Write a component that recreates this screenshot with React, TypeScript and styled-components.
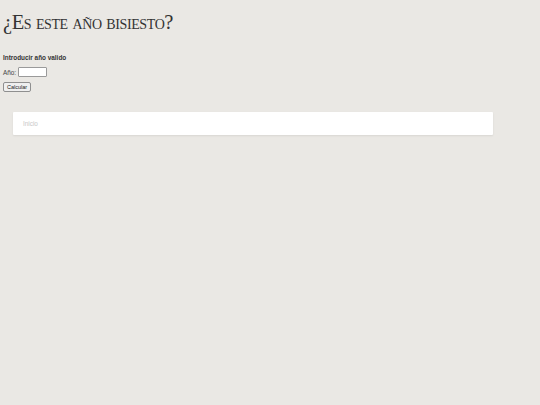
import React from "react";
import styled, { createGlobalStyle } from "styled-components";

const GlobalStyle = createGlobalStyle`
  html, body {
    margin: 0;
    padding: 0;
    background: #eae8e4;
    min-height: 100%;
  }
  body {
    font-family: "Liberation Sans", Arial, sans-serif;
  }
`;

const Page = styled.div`
  padding: 11px 3px 0;
  min-height: 405px;
  box-sizing: border-box;
  color: #333;
`;

const Title = styled.h1`
  margin: 0;
  font-family: "Liberation Serif", "Times New Roman", serif;
  font-variant: small-caps;
  font-weight: normal;
  font-size: 20.5px;
  letter-spacing: -0.4px;
  line-height: 23px;
  color: #333;
`;

const Form = styled.form`
  margin-top: 20px;
  display: flex;
  flex-direction: column;
  align-items: flex-start;
  gap: 5px;
`;

const Heading = styled.h4`
  margin: 0;
  font-size: 6.4px;
  font-weight: bold;
  line-height: 8px;
  color: #333;
`;

const Field = styled.label`
  display: flex;
  align-items: center;
  gap: 2px;
  height: 10px;
  font-size: 6.4px;
  color: #444;
`;

const Input = styled.input`
  width: 29px;
  height: 10px;
  box-sizing: border-box;
  padding: 0;
  border: 1px solid #9a9a9a;
  border-radius: 1px;
  background: #fff;
`;

const Button = styled.button`
  height: 10px;
  box-sizing: border-box;
  padding: 0 3px;
  font-family: "Liberation Sans", Arial, sans-serif;
  font-size: 5.5px;
  color: #222;
  background: #efefef;
  border: 1px solid #8f8f8f;
  border-radius: 2px;
`;

const Card = styled.div`
  margin: 20px 0 0 10px;
  width: 480px;
  height: 23px;
  box-sizing: border-box;
  padding: 0 10px;
  display: flex;
  align-items: center;
  background: #fff;
  box-shadow: 0 1px 2px rgba(0, 0, 0, 0.08);
  border-radius: 1px;
`;

const Breadcrumb = styled.span`
  font-size: 6.4px;
  color: #c8c8c8;
`;

export default function App() {
  return (
    <>
      <GlobalStyle />
      <Page>
        <Title>¿Es este año bisiesto?</Title>
        <Form onSubmit={(e) => e.preventDefault()}>
          <Heading>Introducir año valido</Heading>
          <Field>
            Año: <Input type="text" />
          </Field>
          <Button type="submit">Calcular</Button>
        </Form>
        <Card>
          <Breadcrumb>Inicio</Breadcrumb>
        </Card>
      </Page>
    </>
  );
}
